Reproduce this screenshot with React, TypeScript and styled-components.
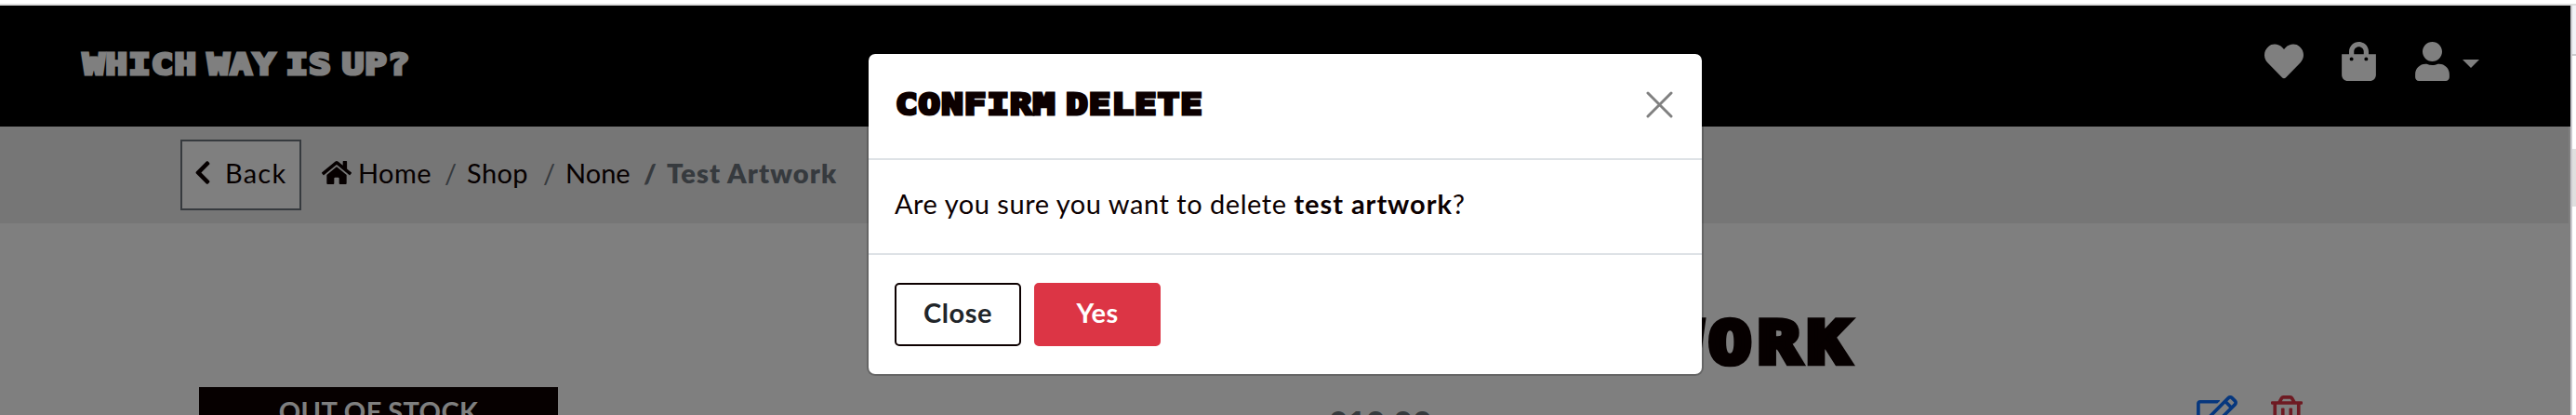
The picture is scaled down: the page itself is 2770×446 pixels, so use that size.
import React from "react";
import styled, { createGlobalStyle } from "styled-components";
import {
  FaHeart,
  FaShoppingBag,
  FaUser,
  FaChevronLeft,
  FaHome,
  FaRegEdit,
  FaRegTrashAlt,
} from "react-icons/fa";

const ink = "#0c0000";
const muted = "#6c757d";
const line = "#dee2e6";
const danger = "#dc3545";

const GlobalStyle = createGlobalStyle`
  *, *::before, *::after { box-sizing: border-box; }
  html, body { margin: 0; padding: 0; background: #fff; overflow: hidden; }
  body { font-family: Lato, "Liberation Sans", sans-serif; font-size: 29px; line-height: 43px; color: ${ink}; }
  svg { display: block; flex: none; }
`;

const Window = styled.div`
  display: flex;
  flex-direction: column;
  width: 2770px;
  height: 446px;
  overflow: hidden;
`;

const TopEdge = styled.div`
  flex: none;
  height: 6px;
  background: #fff;
  border-bottom: 2px solid #dcdcdc;
`;

const Panes = styled.div`
  display: flex;
  flex: 1;
  min-height: 0;
`;

const Page = styled.main`
  position: relative;
  display: flex;
  flex-direction: column;
  width: 2764px;
  overflow: hidden;
  background: #fff;
`;

const Inspector = styled.aside`
  display: flex;
  flex-direction: column;
  width: 6px;
  border-left: 2px solid #cac9ce;
  background: #fff;
`;

const InspectorBar = styled.div`
  height: 54px;
  background: #f2f2f6;
  border-bottom: 2px solid #cbcbce;
`;

const InspectorRow = styled.div`
  height: 62px;
  margin-top: 100px;
  background: #dfdfdf;
`;

const Display = styled.span<{ $size: number; $stroke: number; $track: number; $word: number }>`
  display: inline-block;
  font-family: "DejaVu Sans Mono", monospace;
  font-weight: 700;
  font-size: ${(p) => p.$size}px;
  line-height: 1;
  letter-spacing: ${(p) => p.$track}px;
  word-spacing: ${(p) => p.$word}px;
  -webkit-text-stroke: ${(p) => p.$stroke}px currentColor;
  text-transform: uppercase;
  white-space: nowrap;
  transform: scaleX(1.2);
  transform-origin: left top;
`;

const Glyph = styled.span<{ $width: number; $height: number; $gap?: number; $color?: string }>`
  display: flex;
  flex: none;
  margin-right: ${(p) => p.$gap ?? 0}px;
  color: ${(p) => p.$color ?? "inherit"};

  svg {
    width: ${(p) => p.$width}px;
    height: ${(p) => p.$height}px;
  }
`;

const Navbar = styled.header`
  display: flex;
  flex: none;
  align-items: flex-start;
  justify-content: space-between;
  height: 130px;
  padding: 39px 98px 0 89px;
  background: #000;
  color: #fff;
`;

const Brand = styled.div`
  display: flex;
  padding-top: 8px;
`;

const NavIcons = styled.nav`
  display: flex;
  align-items: flex-start;
`;

const Caret = styled.span`
  margin-top: 19px;
  border-top: 9px solid #fff;
  border-left: 9px solid transparent;
  border-right: 9px solid transparent;
`;

const CrumbBar = styled.div`
  display: flex;
  flex: none;
  align-items: flex-start;
  height: 104px;
  margin-right: 2px;
  padding: 14px 0 0 194px;
  background: #ececec;
`;

const BackButton = styled.button`
  display: flex;
  align-items: flex-start;
  width: 130px;
  height: 76px;
  margin: 0 22px 0 0;
  padding: 19px 0 0 13px;
  border: 2px solid ${muted};
  background: #fff;
  color: ${ink};
  font: inherit;
  line-height: 29px;
  letter-spacing: 1.2px;
`;

const Crumb = styled.span<{ $width: number; $track?: number; $current?: boolean }>`
  flex: none;
  width: ${(p) => p.$width}px;
  padding-top: 14px;
  white-space: nowrap;
  letter-spacing: ${(p) => p.$track ?? 0}px;
  font-weight: ${(p) => (p.$current ? 800 : 400)};
  color: ${(p) => (p.$current ? muted : ink)};
`;

const Slash = styled(Crumb)`
  color: ${muted};
`;

const HomeIcon = styled.span`
  flex: none;
  width: 39px;
  padding-top: 21px;
`;

const Product = styled.section`
  display: flex;
  flex: 1;
  min-height: 0;
`;

const Badge = styled.div`
  flex: none;
  width: 386px;
  height: 60px;
  margin: 176px 0 0 214px;
  padding-top: 4px;
  background: ${ink};
  color: #fff;
  font-weight: 700;
  letter-spacing: 0.4px;
  text-align: center;
  white-space: nowrap;
`;

const Details = styled.div`
  display: flex;
  flex: none;
  flex-direction: column;
  width: 1100px;
  margin-left: 827px;
  padding-top: 97px;
`;

const ProductTitle = styled.h1`
  display: flex;
  flex: none;
  height: 88px;
  margin: 0 0 0 -35px;
`;

const PriceRow = styled.div`
  display: flex;
  flex: none;
  align-items: flex-start;
`;

const Price = styled.span`
  width: 935px;
  padding-top: 8px;
  color: ${muted};
  font-size: 36px;
  font-weight: 800;
`;

const Backdrop = styled.div`
  position: absolute;
  inset: 0;
  background: rgba(0, 0, 0, 0.5);
`;

const Modal = styled.div`
  position: absolute;
  top: 50px;
  left: 932px;
  display: flex;
  flex-direction: column;
  width: 900px;
  height: 348px;
  border: 2px solid rgba(0, 0, 0, 0.2);
  border-radius: 9px;
  background: #fff;
  background-clip: padding-box;
`;

const ModalHeader = styled.div`
  display: flex;
  align-items: flex-start;
  justify-content: space-between;
  height: 114px;
  padding: 38px 31px 0 29px;
  border-bottom: 2px solid ${line};
`;

const CloseIcon = styled.svg`
  margin-top: 2px;
`;

const ModalBody = styled.p`
  height: 102px;
  margin: 0;
  padding: 25px 28px 0;
  border-bottom: 2px solid ${line};
  letter-spacing: 0.53px;
  white-space: nowrap;

  strong {
    letter-spacing: 0.95px;
  }
`;

const ModalFooter = styled.div`
  display: flex;
  gap: 14px;
  padding: 30px 28px 0;
`;

const Button = styled.button<{ $danger?: boolean }>`
  width: 136px;
  height: 68px;
  padding: 0 0 6px;
  border: 2px solid ${(p) => (p.$danger ? danger : ink)};
  border-radius: 5px;
  background: ${(p) => (p.$danger ? danger : "#fff")};
  color: ${(p) => (p.$danger ? "#fff" : "#212529")};
  font: inherit;
  font-weight: 700;
  letter-spacing: 0.5px;
`;

export default function App() {
  return (
    <Window>
      <GlobalStyle />
      <TopEdge />
      <Panes>
        <Page>
          <Navbar>
            <Brand>
              <Display $size={32.5} $stroke={3.2} $track={0.95} $word={-11.5}>
                Which way is up?
              </Display>
            </Brand>
            <NavIcons>
              <Glyph $width={42} $height={42} $gap={41}><FaHeart /></Glyph>
              <Glyph $width={37} $height={42} $gap={42}><FaShoppingBag /></Glyph>
              <Glyph $width={37} $height={42} $gap={14}><FaUser /></Glyph>
              <Caret />
            </NavIcons>
          </Navbar>

          <CrumbBar>
            <BackButton>
              <Glyph $width={18} $height={29} $gap={15}><FaChevronLeft /></Glyph>
              <span>Back</span>
            </BackButton>
            <HomeIcon>
              <Glyph $width={32} $height={29}><FaHome /></Glyph>
            </HomeIcon>
            <Crumb $width={93} $track={0.4}>Home</Crumb>
            <Slash $width={24}>/</Slash>
            <Crumb $width={82} $track={0.4}>Shop</Crumb>
            <Slash $width={24}>/</Slash>
            <Crumb $width={84}>None</Crumb>
            <Slash $width={25} $current>/</Slash>
            <Crumb $width={200} $track={1.1} $current>Test Artwork</Crumb>
          </CrumbBar>

          <Product>
            <Badge>OUT OF STOCK</Badge>
            <Details>
              <ProductTitle>
                <Display $size={63} $stroke={6.5} $track={6.1} $word={-25}>Test Artwork</Display>
              </ProductTitle>
              <PriceRow>
                <Price>£10.00</Price>
                <Glyph $width={44} $height={39} $gap={36} $color="#0d6efd"><FaRegEdit /></Glyph>
                <Glyph $width={34} $height={39} $color={danger}><FaRegTrashAlt /></Glyph>
              </PriceRow>
            </Details>
          </Product>

          <Backdrop />

          <Modal role="dialog">
            <ModalHeader>
              <Display $size={32.5} $stroke={3.2} $track={0.95} $word={-11.5}>Confirm delete</Display>
              <CloseIcon width="29" height="29" viewBox="0 0 29 29" fill="none" stroke="#808080" strokeWidth="3" strokeLinecap="round">
                <path d="M2 2 27 27M27 2 2 27" />
              </CloseIcon>
            </ModalHeader>
            <ModalBody>
              Are you sure you want to delete <strong>test artwork</strong>?
            </ModalBody>
            <ModalFooter>
              <Button>Close</Button>
              <Button $danger>Yes</Button>
            </ModalFooter>
          </Modal>
        </Page>
        <Inspector>
          <InspectorBar />
          <InspectorRow />
        </Inspector>
      </Panes>
    </Window>
  );
}
